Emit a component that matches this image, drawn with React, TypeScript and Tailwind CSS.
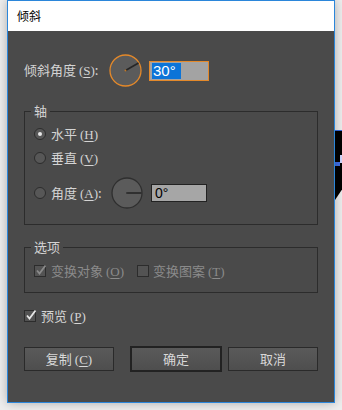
import React from "react";

const cjk = "font-['Noto_Sans_CJK_SC','Noto_Sans',sans-serif]";

function Mn({ c }: { c: string }) {
  return (
    <span className="font-['Liberation_Serif',serif] text-[13px]">
      (<span className="underline underline-offset-2">{c}</span>)
    </span>
  );
}

function Dial({ active, angle }: { active?: boolean; angle: number }) {
  const size = active ? 33 : 32;
  const r = size / 2 - 1;
  const c = size / 2;
  const rad = (angle * Math.PI) / 180;
  const x2 = c + (r - 0.5) * Math.cos(rad);
  const y2 = c - (r - 0.5) * Math.sin(rad);
  return (
    <svg width={size} height={size} viewBox={`0 0 ${size} ${size}`} className="shrink-0">
      <circle cx={c} cy={c} r={r} fill="#5b5b5b" stroke={active ? "#e4892a" : "#2f2f2f"} strokeWidth={1.3} />
      <line x1={c} y1={c} x2={x2} y2={y2} stroke="#262626" strokeWidth={1.6} />
      <circle cx={c} cy={c} r={1} fill={active ? "#c07828" : "#333"} />
    </svg>
  );
}

function Radio({ checked }: { checked?: boolean }) {
  return (
    <span className="w-[12px] h-[12px] rounded-full border border-[#2c2c2c] bg-[#575757] flex items-center justify-center shrink-0">
      {checked && <span className="w-[4px] h-[4px] rounded-full bg-[#e8e8e8]" />}
    </span>
  );
}

function Check({ checked, disabled }: { checked?: boolean; disabled?: boolean }) {
  return (
    <span className="w-[12px] h-[12px] border border-[#2c2c2c] bg-[#535353] flex items-center justify-center shrink-0 relative">
      {checked && (
        <svg width="12" height="12" viewBox="0 0 12 12" className="absolute left-[0px] top-[-2px]">
          <path d="M2 6.5 L4.5 9.5 L10.5 1.5" fill="none" stroke={disabled ? "#8a8a8a" : "#e6e6e6"} strokeWidth="1.8" />
        </svg>
      )}
    </span>
  );
}

function Btn({ children, primary, w }: { children: React.ReactNode; primary?: boolean; w: string }) {
  return (
    <div
      className={`${w} ${
        primary ? "h-[26px] border-2 border-[#222222]" : "h-[24px] border border-[#2a2a2a]"
      } bg-gradient-to-b from-[#5a5a5a] to-[#4e4e4e] flex items-center justify-center text-[13px] text-[#d8d8d8] shrink-0`}
    >
      {children}
    </div>
  );
}

export default function App() {
  return (
    <div className={`w-[342px] h-[410px] bg-[#eeeeee] relative overflow-hidden ${cjk}`}>
      {/* background canvas fragment on the right */}
      <div className="absolute left-[335px] top-[130px] w-[7px] h-[70px] bg-black border-t border-[#3a6fe0] [clip-path:polygon(0_0,100%_0,100%_85%,0_100%)]">
        <div className="absolute left-0 top-[31px] w-[5px] h-[4px] bg-[#3f6fe6]" />
        <div className="absolute left-[5px] top-[24px] w-[2px] h-[8px] bg-[#d0d8ff]" />
      </div>

      <div className="absolute left-[7px] top-0 w-[328px] h-[403px] border border-[#2b86da] flex flex-col shadow-[0_0_10px_rgba(0,0,0,0.28)]">
        <div className="h-[30px] bg-white flex items-center pl-[9px] text-[12px] text-black shrink-0">倾斜</div>
        <div className="flex-1 bg-[#4a4a4a] px-[16px] pt-[23px] flex flex-col text-[13px] text-[#d4d4d4]">
          {/* angle row */}
          <div className="h-[33px] flex items-center">
            <span className="w-[85px] whitespace-nowrap">
              倾斜角度 <Mn c="S" />:
            </span>
            <Dial active angle={30} />
            <div className="ml-[7px] w-[60px] h-[20px] border border-[#e4892a] bg-[#a3a3a3] flex items-center pl-[2px]">
              <span className="bg-[#0b74d8] text-white h-[16px] w-[29px] flex items-center pl-[1px] font-['Liberation_Sans',sans-serif] text-[15px] leading-none">
                30°
              </span>
            </div>
          </div>

          {/* axis group */}
          <div className="mt-[24px] h-[114px] border border-[#2c2c2c] relative pl-[9px] pt-[14px] flex flex-col shrink-0">
            <span className="absolute left-[6px] top-[-9px] h-[16px] px-[3px] bg-[#4a4a4a] flex items-center">轴</span>
            <div className="h-[16px] flex items-center gap-[5px]">
              <Radio checked />
              <span>
                水平 <Mn c="H" />
              </span>
            </div>
            <div className="mt-[8px] h-[16px] flex items-center gap-[5px]">
              <Radio />
              <span>
                垂直 <Mn c="V" />
              </span>
            </div>
            <div className="mt-[11px] h-[32px] flex items-center">
              <Radio />
              <span className="ml-[5px] w-[60px] whitespace-nowrap">
                角度 <Mn c="A" />:
              </span>
              <Dial angle={0} />
              <div className="ml-[8px] w-[56px] h-[18px] border border-[#222222] bg-[#a6a6a6] flex items-center pl-[3px] text-[14px] text-black font-['Liberation_Sans',sans-serif] leading-none">
                0°
              </div>
            </div>
          </div>

          {/* options group */}
          <div className="mt-[22px] h-[46px] border border-[#2c2c2c] relative pl-[9px] pt-[15px] flex shrink-0">
            <span className="absolute left-[6px] top-[-9px] h-[16px] px-[3px] bg-[#4a4a4a] flex items-center">选项</span>
            <div className="h-[16px] flex items-center text-[#8b8b8b]">
              <Check checked disabled />
              <span className="ml-[5px] w-[86px] whitespace-nowrap">
                变换对象 <Mn c="O" />
              </span>
              <Check />
              <span className="ml-[4px] whitespace-nowrap">
                变换图案 <Mn c="T" />
              </span>
            </div>
          </div>

          {/* preview */}
          <div className="mt-[15px] h-[16px] flex items-center gap-[5px]">
            <Check checked />
            <span>
              预览 <Mn c="P" />
            </span>
          </div>

          {/* buttons */}
          <div className="mt-[22px] h-[26px] flex items-center">
            <Btn w="w-[90px]">
              <span>
                复制 <Mn c="C" />
              </span>
            </Btn>
            <div className="ml-[16px]">
              <Btn primary w="w-[92px]">确定</Btn>
            </div>
            <div className="ml-[6px]">
              <Btn w="w-[90px]">取消</Btn>
            </div>
          </div>
        </div>
      </div>
    </div>
  );
}
